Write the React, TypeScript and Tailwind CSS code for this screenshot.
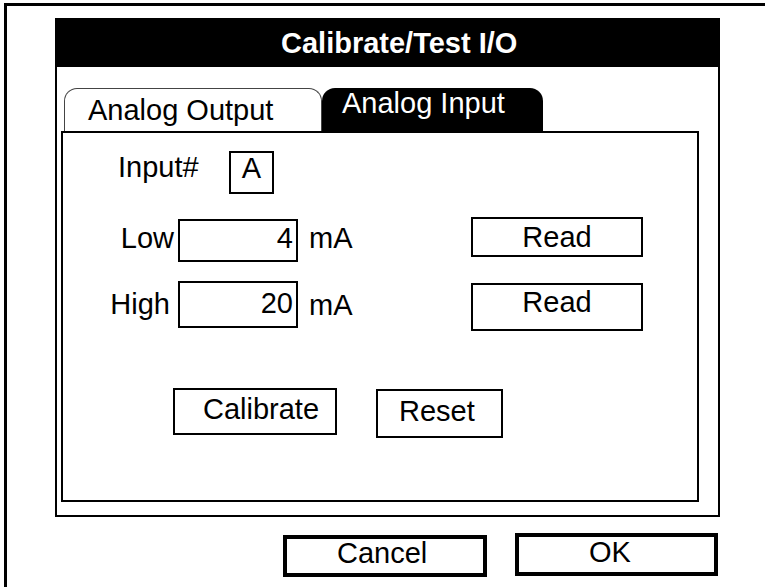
export default function App() {
  return (
    <div className="w-[765px] h-[587px] overflow-hidden bg-white text-black font-['Liberation_Sans',Arial,sans-serif] text-[29px] leading-[28px]">
      <div className="ml-[4px] mt-[3px] h-[600px] border-l-[3px] border-t-[3px] border-black pl-[48px] pt-[12px]">
        <div className="w-[665px] h-[499px] flex flex-col">
          <div className="h-[49px] shrink-0 bg-black text-white font-bold pl-[226px] pt-[11px]">
            Calibrate/Test I/O
          </div>
          <div className="flex-1 flex flex-col border-x-2 border-b-2 border-black">
            <div className="flex mt-[21px] pl-[7px] h-[43px]">
              <div className="w-[258px] h-[43px] border border-b-0 border-[#444] rounded-t-[13px] pl-[23px] pt-[7px]">
                Analog Output
              </div>
              <div className="w-[221px] h-[43px] bg-black text-white rounded-t-[13px] pl-[20px] pt-[1px]">
                Analog Input
              </div>
            </div>
            <div className="ml-[4px] w-[638px] h-[371px] border-2 border-black flex flex-col">
              <div className="flex items-start mt-[18px]">
                <div className="w-[166px] pl-[55px] pt-[2px]">Input#</div>
                <div className="w-[45px] h-[43px] border-2 border-black text-center pt-[1px]">A</div>
              </div>

              <div className="flex items-start mt-[25px]">
                <div className="w-[115px] text-right pr-[4px] pt-[5px]">Low</div>
                <div className="w-[120px] h-[43px] border-2 border-black text-right pr-[3px] pt-[3px]">4</div>
                <div className="w-[173px] pl-[11px] pt-[5px]">mA</div>
                <div className="w-[172px] h-[40px] -mt-[2px] border-2 border-black flex items-center justify-center">
                  Read
                </div>
              </div>

              <div className="flex items-start mt-[19px]">
                <div className="w-[115px] text-right pr-[8px] pt-[9px]">High</div>
                <div className="w-[120px] h-[47px] border-2 border-black text-right pr-[3px] pt-[6px]">20</div>
                <div className="w-[173px] pl-[11px] pt-[10px]">mA</div>
                <div className="w-[172px] h-[48px] mt-[2px] border-2 border-black text-center pt-[3px]">
                  Read
                </div>
              </div>

              <div className="flex items-start mt-[57px]">
                <div className="ml-[110px] w-[164px] h-[47px] border-2 border-black pl-[28px] pt-[5px]">
                  Calibrate
                </div>
                <div className="ml-[39px] mt-[1px] w-[127px] h-[49px] border-2 border-black pl-[21px] pt-[6px]">
                  Reset
                </div>
              </div>
            </div>
          </div>
        </div>

        <div className="flex items-start mt-[18px] ml-[228px]">
          <div className="w-[204px] h-[42px] border-4 border-black pl-[50px]">Cancel</div>
          <div className="ml-[28px] -mt-[2px] w-[203px] h-[43px] border-4 border-black pl-[70px] pt-[1px]">OK</div>
        </div>
      </div>
    </div>
  );
}
